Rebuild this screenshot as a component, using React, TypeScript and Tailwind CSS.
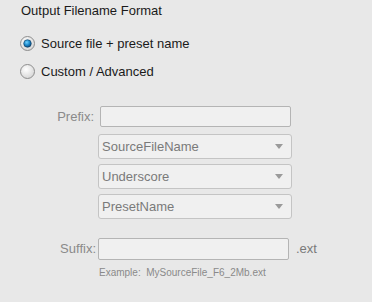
import React from 'react';

const font = { fontFamily: '"Liberation Sans", Arial, sans-serif' };

function Radio({ checked }: { checked?: boolean }) {
  return (
    <svg width="15" height="15" viewBox="0 0 15 15" className="shrink-0">
      <defs>
        <radialGradient id={checked ? 'rg-on' : 'rg-off'} cx="40%" cy="35%" r="70%">
          <stop offset="0%" stopColor="#ffffff" />
          <stop offset="100%" stopColor="#d4d4d4" />
        </radialGradient>
        <radialGradient id="dot" cx="40%" cy="35%" r="70%">
          <stop offset="0%" stopColor="#6fd0ff" />
          <stop offset="55%" stopColor="#1a86c8" />
          <stop offset="100%" stopColor="#0b3f6e" />
        </radialGradient>
      </defs>
      <circle cx="7.5" cy="7.5" r="7" fill={`url(#${checked ? 'rg-on' : 'rg-off'})`} stroke="#8e8e8e" />
      {checked && <circle cx="7.5" cy="7.5" r="3.8" fill="url(#dot)" stroke="#0d3a5e" strokeWidth="0.6" />}
    </svg>
  );
}

function Select({ value }: { value: string }) {
  return (
    <div className="flex h-[25px] w-[194px] items-center justify-between rounded-[3px] border border-[#c4c4c4] bg-[#f0f0f0] pl-[3px] pr-[8px]">
      <span className="text-[13px] text-[#7a7a7a]">{value}</span>
      <svg width="8" height="5" viewBox="0 0 8 5">
        <path d="M0 0 H8 L4 5 Z" fill="#9a9a9a" />
      </svg>
    </div>
  );
}

export default function App() {
  return (
    <div className="h-[302px] w-[372px] overflow-hidden bg-[#e8e8e8]" style={font}>
      <div className="pl-[21px] pt-[3px] text-[13px] leading-[16px] text-[#1a1a1a]">Output Filename Format</div>

      <div className="mt-[17px] flex flex-col gap-[13px] pl-[20px]">
        <label className="flex h-[15px] items-center gap-[6px] text-[13px] text-[#1a1a1a]">
          <Radio checked />
          <span>Source file + preset name</span>
        </label>
        <label className="flex h-[15px] items-center gap-[6px] text-[13px] text-[#1a1a1a]">
          <Radio />
          <span>Custom / Advanced</span>
        </label>
      </div>

      <div className="mt-[27px] flex flex-col">
        <div className="flex items-center">
          <span className="w-[100px] pr-[6px] text-right text-[13px] text-[#8a8a8a]">Prefix:</span>
          <div className="h-[21px] w-[191px] rounded-[2px] border border-[#b4b4b4] bg-[#f0f0f0]" />
        </div>
        <div className="mt-[7px] flex flex-col gap-[5px] pl-[98px]">
          <Select value="SourceFileName" />
          <Select value="Underscore" />
          <Select value="PresetName" />
        </div>
        <div className="mt-[19px] flex items-center">
          <span className="w-[98px] pr-[2px] text-right text-[13px] text-[#8a8a8a]">Suffix:</span>
          <div className="h-[22px] w-[191px] rounded-[2px] border border-[#b4b4b4] bg-[#f0f0f0]" />
          <span className="pl-[7px] text-[13px] text-[#7a7a7a]">.ext</span>
        </div>
        <div className="mt-[5px] pl-[99px] text-[10px] text-[#8a8a8a]">
          Example:&nbsp;&nbsp;MySourceFile_F6_2Mb.ext
        </div>
      </div>
    </div>
  );
}
